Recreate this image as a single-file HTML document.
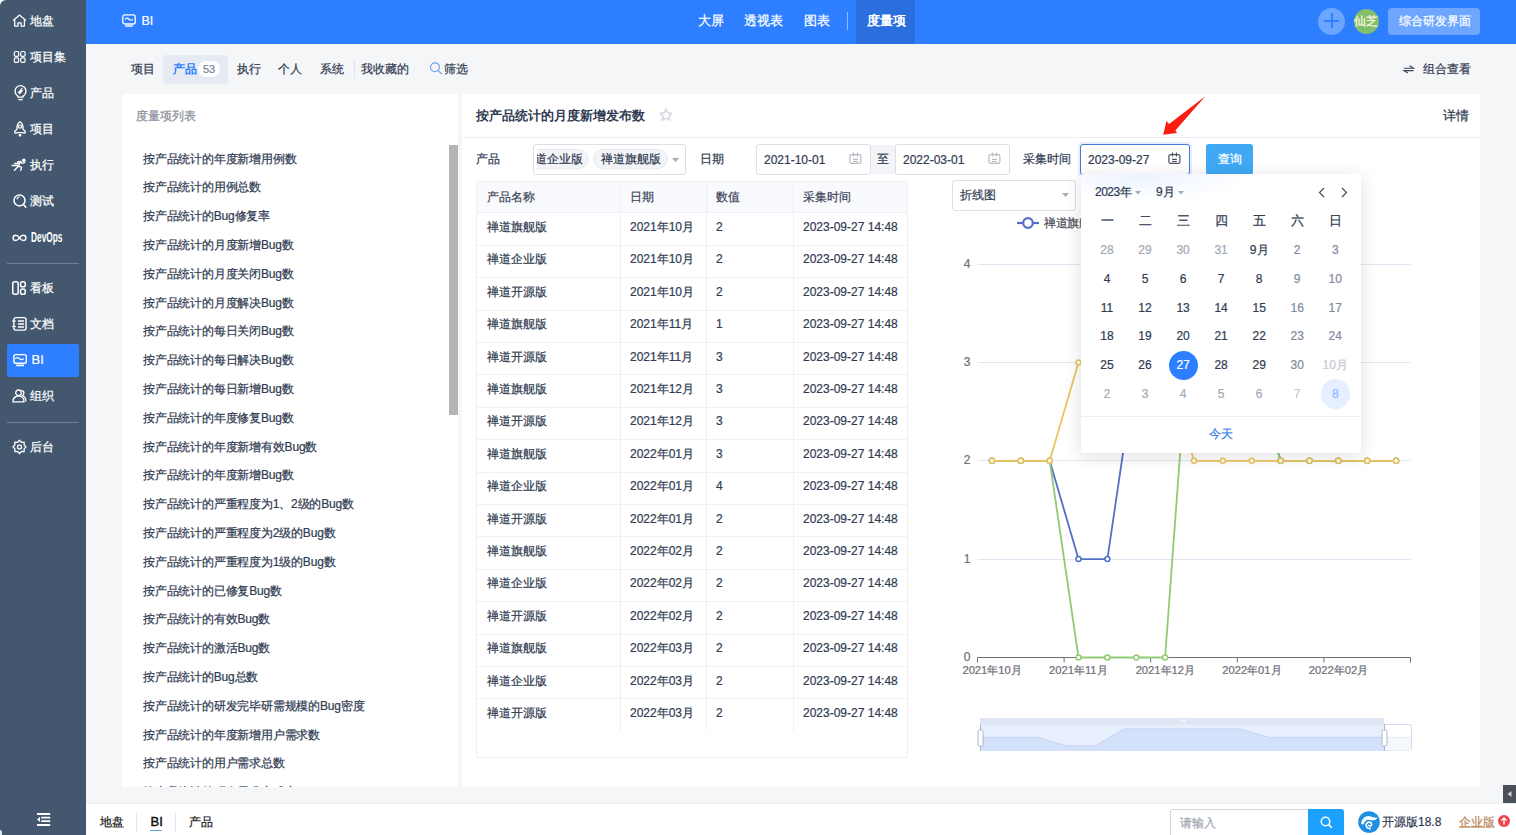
<!DOCTYPE html><html><head><meta charset="utf-8"><style>
*{box-sizing:border-box;margin:0;padding:0}
html,body{width:1516px;height:835px;overflow:hidden;background:#f5f6f8;font-family:"Liberation Sans",sans-serif;font-size:12px;color:#313c52}
.t{position:absolute;line-height:20px;white-space:nowrap;-webkit-text-stroke:0.22px currentColor}
.b{position:absolute}
svg{position:absolute;overflow:visible}
</style></head><body>
<div class="b" style="left:0;top:0;width:12px;height:12px;background:#fff"></div>
<div class="b" style="left:0;top:0;width:86px;height:835px;background:#43576e;border-top-left-radius:6px"></div>
<div class="b" style="left:0;top:830px;width:2px;height:5px;background:#dce6f0;border-top-right-radius:2px"></div>
<div class="b" style="left:7px;top:344px;width:72px;height:33px;background:#2e7fff;border-radius:2px"></div>
<div class="b" style="left:7px;top:263px;width:72px;height:1px;background:#6e8198"></div>
<div class="b" style="left:7px;top:422px;width:72px;height:1px;background:#6e8198"></div>
<svg style="left:12px;top:13px" width="16" height="16" viewBox="0 0 16 16"><path d="M1.2 7.4 L7.5 2.1 L13.9 7.4 M2.7 6.4 V13.1 H6 V9.9 H9.1 V13.1 H12.4 V6.4" fill="none" stroke="#fff" stroke-width="1.25" stroke-linejoin="round"/></svg>
<div class="t" style="left:30px;top:10.5px;font-size:12px;color:#ffffff;font-weight:normal;">地盘</div>
<svg style="left:12px;top:49px" width="16" height="16" viewBox="0 0 16 16"><rect x="2.3" y="2.5" width="4.4" height="4.8" rx="1.4" fill="none" stroke="#fff" stroke-width="1.2"/><rect x="8.7" y="2.5" width="4.4" height="4.8" rx="1.4" fill="none" stroke="#fff" stroke-width="1.2"/><rect x="2.3" y="8.8" width="4.4" height="4.6" rx="1.4" fill="none" stroke="#fff" stroke-width="1.2"/><rect x="8.7" y="8.8" width="4.4" height="4.6" rx="1.4" fill="none" stroke="#fff" stroke-width="1.2"/></svg>
<div class="t" style="left:30px;top:46.5px;font-size:12px;color:#ffffff;font-weight:normal;">项目集</div>
<svg style="left:12px;top:85px" width="16" height="16" viewBox="0 0 16 16"><path d="M5.9 11.1 C4 10 3.1 8.3 3.1 6.3 C3.1 3.1 5.5 0.7 8.5 0.7 C11.5 0.7 13.9 3.1 13.9 6.3 C13.9 8.3 13 10 11.1 11.1 V12.2 H5.9 Z" fill="none" stroke="#fff" stroke-width="1.3" stroke-linejoin="round"/><path d="M6.4 14.6 H10.6" stroke="#fff" stroke-width="1.4"/><path d="M10.2 3.2 L6.4 7.6 L10.4 5.4 L7.4 9.2" fill="none" stroke="#fff" stroke-width="1.3" stroke-linejoin="round"/></svg>
<div class="t" style="left:30px;top:82.5px;font-size:12px;color:#ffffff;font-weight:normal;">产品</div>
<svg style="left:12px;top:121px" width="16" height="16" viewBox="0 0 16 16"><path d="M8 0.7 C10.6 2.4 11.3 5.2 11 8.2 L13.2 10.3 C13.6 11.6 13 12.3 12 12.1 L10.5 11.7 H5.5 L4 12.1 C3 12.3 2.4 11.6 2.8 10.3 L5 8.2 C4.7 5.2 5.4 2.4 8 0.7 Z" fill="none" stroke="#fff" stroke-width="1.3" stroke-linejoin="round"/><circle cx="8" cy="5.6" r="1.6" fill="none" stroke="#fff" stroke-width="1.2"/><rect x="6.7" y="13" width="2.7" height="2.6" rx="0.8" fill="#fff"/></svg>
<div class="t" style="left:30px;top:118.5px;font-size:12px;color:#ffffff;font-weight:normal;">项目</div>
<svg style="left:12px;top:157px" width="16" height="16" viewBox="0 0 16 16"><circle cx="11.8" cy="3.2" r="1.8" fill="#fff"/><path d="M5.6 5 L8.6 4.5 L10 6.4 L12.8 5.4 M8.6 4.5 L6.4 9.2 L2.4 13.2 M6.4 9.2 L9.6 10.4 L8.6 13.4 M2.6 6.5 H6.4 M0.2 8.5 H5.6" fill="none" stroke="#fff" stroke-width="1.4" stroke-linecap="round" stroke-linejoin="round"/></svg>
<div class="t" style="left:30px;top:154.5px;font-size:12px;color:#ffffff;font-weight:normal;">执行</div>
<svg style="left:12px;top:193px" width="16" height="16" viewBox="0 0 16 16"><circle cx="7.5" cy="7.4" r="5.5" fill="none" stroke="#fff" stroke-width="1.5"/><path d="M11.5 11.6 L13.8 14.2" stroke="#fff" stroke-width="1.5" stroke-linecap="round"/><path d="M5 6 C5.4 5 6.2 4.3 7.2 4" fill="none" stroke="#fff" stroke-width="1.1" stroke-linecap="round"/></svg>
<div class="t" style="left:30px;top:190.5px;font-size:12px;color:#ffffff;font-weight:normal;">测试</div>
<svg style="left:12px;top:230px" width="16" height="16" viewBox="0 0 16 16"><path d="M7.5 7.9 C6.3 6.1 5.3 5.3 3.9 5.3 C2.3 5.3 1.1 6.4 1.1 7.9 C1.1 9.4 2.3 10.5 3.9 10.5 C5.3 10.5 6.3 9.7 7.5 7.9 C8.7 6.1 9.7 5.3 11.1 5.3 C12.7 5.3 13.9 6.4 13.9 7.9 C13.9 9.4 12.7 10.5 11.1 10.5 C9.7 10.5 8.7 9.7 7.5 7.9 Z" fill="none" stroke="#fff" stroke-width="1.4"/></svg>
<div class="t" style="left:30.8px;top:227.1px;font-size:14px;color:#ffffff;font-weight:bold;-webkit-text-stroke:0;letter-spacing:0px;transform:scaleX(0.595);transform-origin:left">DevOps</div>
<svg style="left:12px;top:280px" width="16" height="16" viewBox="0 0 16 16"><rect x="0.75" y="1.65" width="5.4" height="12.6" rx="2" fill="none" stroke="#fff" stroke-width="1.5"/><rect x="8.55" y="1.65" width="4.7" height="5.2" rx="1.8" fill="none" stroke="#fff" stroke-width="1.5"/><rect x="8.55" y="8.95" width="4.7" height="5.3" rx="1.8" fill="none" stroke="#fff" stroke-width="1.5"/></svg>
<div class="t" style="left:30px;top:277.5px;font-size:12px;color:#ffffff;font-weight:normal;">看板</div>
<svg style="left:12px;top:316px" width="16" height="16" viewBox="0 0 16 16"><rect x="1.9" y="1.6" width="12.1" height="12.5" rx="1.8" fill="none" stroke="#fff" stroke-width="1.4"/><path d="M5.9 5 H12 M5.9 8 H12 M5.9 11 H12" stroke="#fff" stroke-width="1.6"/><path d="M0 5 H3.9 M0 10.5 H3.9" stroke="#fff" stroke-width="1.2"/></svg>
<div class="t" style="left:30px;top:313.5px;font-size:12px;color:#ffffff;font-weight:normal;">文档</div>
<svg style="left:12px;top:352px" width="16" height="16" viewBox="0 0 16 16"><rect x="1.9" y="2.6" width="12.4" height="8.7" rx="1.8" fill="none" stroke="#fff" stroke-width="1.4"/><path d="M3.4 6.9 C4.6 5.2 5.8 5.2 7.3 6.6 C8.8 8 10.2 8.1 11.6 6.6" fill="none" stroke="#fff" stroke-width="1.3"/><path d="M4.2 13.4 H12" stroke="#fff" stroke-width="1.6"/></svg>
<div class="t" style="left:31.5px;top:349.5px;font-size:13px;color:#ffffff;font-weight:normal;">BI</div>
<svg style="left:12px;top:388px" width="16" height="16" viewBox="0 0 16 16"><circle cx="6.5" cy="4.8" r="2.8" fill="none" stroke="#fff" stroke-width="1.3"/><path d="M0.9 13.9 C0.9 10.2 3.3 8.2 6.5 8.2 C9.7 8.2 12 10.2 12 13.9 Z" fill="none" stroke="#fff" stroke-width="1.3" stroke-linejoin="round"/><path d="M9.6 2.3 C11 2.6 11.9 3.7 11.9 5 C11.9 6.1 11.3 7 10.4 7.5 C12.5 8.5 13.9 10.5 13.9 13.6" fill="none" stroke="#fff" stroke-width="1.3"/></svg>
<div class="t" style="left:30px;top:385.5px;font-size:12px;color:#ffffff;font-weight:normal;">组织</div>
<svg style="left:12px;top:439px" width="16" height="16" viewBox="0 0 16 16"><path d="M7.50 1.30 L9.41 3.28 L12.17 3.23 L12.12 5.99 L14.10 7.90 L12.12 9.81 L12.17 12.57 L9.41 12.52 L7.50 14.50 L5.59 12.52 L2.83 12.57 L2.88 9.81 L0.90 7.90 L2.88 5.99 L2.83 3.23 L5.59 3.28 Z" fill="none" stroke="#fff" stroke-width="1.3" stroke-linejoin="round"/><circle cx="7.5" cy="7.9" r="2" fill="none" stroke="#fff" stroke-width="1.3"/></svg>
<div class="t" style="left:30px;top:436.5px;font-size:12px;color:#ffffff;font-weight:normal;">后台</div>
<svg style="left:37px;top:813px" width="14" height="14" viewBox="0 0 14 14"><path d="M0 1 H13.2 M4.2 4.6 H13.2 M4.2 8.1 H13.2 M0 12 H13.2" stroke="#fff" stroke-width="1.9"/><path d="M0 6.4 L3 3.8 V9.1 Z" fill="#fff"/></svg>
<div class="b" style="left:86px;top:0;width:1430px;height:44px;background:#2e7fff"></div>
<svg style="left:122px;top:14px" width="14" height="13" viewBox="0 0 14 13"><rect x="0.8" y="0.8" width="12.4" height="9.2" rx="2" fill="none" stroke="#fff" stroke-width="1.3"/><path d="M3 5.4 C4.2 3.8 5.4 3.8 7 5.2 C8.6 6.6 9.8 6.6 11 5" fill="none" stroke="#fff" stroke-width="1.2"/><path d="M3.2 12 H10.8" stroke="#fff" stroke-width="1.4"/></svg>
<div class="t" style="left:141.5px;top:11.0px;font-size:12.5px;color:#ffffff;font-weight:normal;">BI</div>
<div class="b" style="left:856px;top:0;width:59px;height:44px;background:#2b6fdf"></div>
<div class="t" style="left:697.5px;top:10.5px;font-size:13px;color:#ffffff;font-weight:normal;">大屏</div>
<div class="t" style="left:744px;top:10.5px;font-size:13px;color:#ffffff;font-weight:normal;">透视表</div>
<div class="t" style="left:804px;top:10.5px;font-size:13px;color:#ffffff;font-weight:normal;">图表</div>
<div class="b" style="left:847px;top:12px;width:1px;height:18px;background:#8fbaff"></div>
<div class="t" style="left:866.5px;top:10.5px;font-size:13px;color:#ffffff;font-weight:bold;-webkit-text-stroke:0;">度量项</div>
<div class="b" style="left:1318px;top:8px;width:27px;height:27px;border-radius:50%;background:#6aa6ff"></div>
<div class="b" style="left:1324px;top:19.8px;width:15px;height:2px;background:#2e7fff"></div>
<div class="b" style="left:1330.5px;top:13.3px;width:2px;height:15px;background:#2e7fff"></div>
<div class="b" style="left:1354px;top:9px;width:25px;height:25px;border-radius:50%;background:#83bf6a"></div>
<div class="t" style="left:1354px;top:10.8px;font-size:12px;color:#fffbe6;font-weight:normal;">仙芝</div>
<div class="b" style="left:1388px;top:8px;width:92px;height:27px;border-radius:4px;background:#6ea6ff"></div>
<div class="t" style="left:1399px;top:10.8px;font-size:12px;color:#ffffff;font-weight:normal;">综合研发界面</div>
<div class="b" style="left:163px;top:55px;width:65px;height:29px;border-radius:3px;background:#e6ebf3"></div>
<div class="t" style="left:131px;top:58.6px;font-size:12px;color:#313c52;font-weight:normal;">项目</div>
<div class="t" style="left:172.5px;top:58.6px;font-size:12px;color:#2e7fff;font-weight:bold;-webkit-text-stroke:0;">产品</div>
<div class="b" style="left:198px;top:61px;width:22px;height:16px;border-radius:8px;background:#fff"></div>
<div class="t" style="left:203px;top:59.0px;font-size:11px;color:#7c8396;font-weight:normal;">53</div>
<div class="t" style="left:236.5px;top:58.6px;font-size:12px;color:#313c52;font-weight:normal;">执行</div>
<div class="t" style="left:278px;top:58.6px;font-size:12px;color:#313c52;font-weight:normal;">个人</div>
<div class="t" style="left:319.5px;top:58.6px;font-size:12px;color:#313c52;font-weight:normal;">系统</div>
<div class="b" style="left:354px;top:60px;width:1px;height:18px;background:#dfe3ea"></div>
<div class="t" style="left:360.5px;top:58.6px;font-size:12px;color:#313c52;font-weight:normal;">我收藏的</div>
<svg style="left:430px;top:62px" width="13" height="13" viewBox="0 0 13 13"><circle cx="5" cy="5.3" r="4.4" fill="none" stroke="#6b9cf2" stroke-width="1.15"/><path d="M8.2 8.6 L11.4 11.6" stroke="#6b9cf2" stroke-width="1.2" stroke-linecap="round"/></svg>
<div class="t" style="left:444px;top:58.6px;font-size:12px;color:#313c52;font-weight:normal;">筛选</div>
<svg style="left:1404px;top:65px" width="10" height="9" viewBox="0 0 10 9"><path d="M0 3.2 H9.5 L5.6 0.8 M9.5 5.6 H0 L3.8 8" fill="none" stroke="#3a4256" stroke-width="1.1"/></svg>
<div class="t" style="left:1423px;top:58.6px;font-size:12px;color:#313c52;font-weight:normal;">组合查看</div>
<div class="b" style="left:122px;top:94px;width:336px;height:693px;background:#fff;border-radius:2px;overflow:hidden" id="lc">
<div class="t" style="left:21px;top:54.5px;font-size:12px;color:#313c52;letter-spacing:-0.2px">按产品统计的年度新增用例数</div>
<div class="t" style="left:21px;top:83.3px;font-size:12px;color:#313c52;letter-spacing:-0.2px">按产品统计的用例总数</div>
<div class="t" style="left:21px;top:112.1px;font-size:12px;color:#313c52;letter-spacing:-0.2px">按产品统计的Bug修复率</div>
<div class="t" style="left:21px;top:140.9px;font-size:12px;color:#313c52;letter-spacing:-0.2px">按产品统计的月度新增Bug数</div>
<div class="t" style="left:21px;top:169.7px;font-size:12px;color:#313c52;letter-spacing:-0.2px">按产品统计的月度关闭Bug数</div>
<div class="t" style="left:21px;top:198.5px;font-size:12px;color:#313c52;letter-spacing:-0.2px">按产品统计的月度解决Bug数</div>
<div class="t" style="left:21px;top:227.3px;font-size:12px;color:#313c52;letter-spacing:-0.2px">按产品统计的每日关闭Bug数</div>
<div class="t" style="left:21px;top:256.1px;font-size:12px;color:#313c52;letter-spacing:-0.2px">按产品统计的每日解决Bug数</div>
<div class="t" style="left:21px;top:284.9px;font-size:12px;color:#313c52;letter-spacing:-0.2px">按产品统计的每日新增Bug数</div>
<div class="t" style="left:21px;top:313.7px;font-size:12px;color:#313c52;letter-spacing:-0.2px">按产品统计的年度修复Bug数</div>
<div class="t" style="left:21px;top:342.5px;font-size:12px;color:#313c52;letter-spacing:-0.2px">按产品统计的年度新增有效Bug数</div>
<div class="t" style="left:21px;top:371.3px;font-size:12px;color:#313c52;letter-spacing:-0.2px">按产品统计的年度新增Bug数</div>
<div class="t" style="left:21px;top:400.1px;font-size:12px;color:#313c52;letter-spacing:-0.2px">按产品统计的严重程度为1、2级的Bug数</div>
<div class="t" style="left:21px;top:428.9px;font-size:12px;color:#313c52;letter-spacing:-0.2px">按产品统计的严重程度为2级的Bug数</div>
<div class="t" style="left:21px;top:457.7px;font-size:12px;color:#313c52;letter-spacing:-0.2px">按产品统计的严重程度为1级的Bug数</div>
<div class="t" style="left:21px;top:486.5px;font-size:12px;color:#313c52;letter-spacing:-0.2px">按产品统计的已修复Bug数</div>
<div class="t" style="left:21px;top:515.3px;font-size:12px;color:#313c52;letter-spacing:-0.2px">按产品统计的有效Bug数</div>
<div class="t" style="left:21px;top:544.1px;font-size:12px;color:#313c52;letter-spacing:-0.2px">按产品统计的激活Bug数</div>
<div class="t" style="left:21px;top:572.9px;font-size:12px;color:#313c52;letter-spacing:-0.2px">按产品统计的Bug总数</div>
<div class="t" style="left:21px;top:601.7px;font-size:12px;color:#313c52;letter-spacing:-0.2px">按产品统计的研发完毕研需规模的Bug密度</div>
<div class="t" style="left:21px;top:630.5px;font-size:12px;color:#313c52;letter-spacing:-0.2px">按产品统计的年度新增用户需求数</div>
<div class="t" style="left:21px;top:659.3px;font-size:12px;color:#313c52;letter-spacing:-0.2px">按产品统计的用户需求总数</div>
<div class="t" style="left:21px;top:688.1px;font-size:12px;color:#313c52;letter-spacing:-0.2px">按产品统计的研发需求完成率</div>
</div>
<div class="t" style="left:136px;top:106.0px;font-size:12px;color:#8a8f9c;font-weight:normal;">度量项列表</div>
<div class="b" style="left:449px;top:145px;width:9px;height:270px;background:#b4b4b4"></div>
<div class="b" style="left:462px;top:94px;width:1018px;height:693px;background:#fff;border-radius:2px"></div>
<div class="t" style="left:476px;top:105.5px;font-size:13px;color:#313c52;font-weight:bold;-webkit-text-stroke:0;">按产品统计的月度新增发布数</div>
<svg style="left:659px;top:108px" width="14" height="14" viewBox="0 0 14 14"><path d="M7 1 L8.8 4.8 L12.9 5.3 L9.9 8.1 L10.7 12.2 L7 10.2 L3.3 12.2 L4.1 8.1 L1.1 5.3 L5.2 4.8 Z" fill="none" stroke="#d3d7df" stroke-width="1.5" stroke-linejoin="round"/></svg>
<div class="t" style="left:1442.5px;top:105.5px;font-size:13px;color:#313c52;font-weight:normal;">详情</div>
<div class="b" style="left:462px;top:137px;width:1018px;height:1px;background:#eceef2"></div>
<div class="t" style="left:476px;top:149.0px;font-size:12px;color:#313c52;font-weight:normal;">产品</div>
<div class="b" style="left:533px;top:144px;width:153px;height:31px;border:1px solid #dcdfe5;border-radius:3px;background:#fff;overflow:hidden"><div class="b" style="left:3px;top:0;width:55px;height:29px;overflow:hidden"><div class="b" style="left:-22px;top:4px;width:74px;height:20px;border:1px solid #e8eaee;border-radius:10px;background:#f3f4f7"></div><div class="t" style="left:-14px;top:3.5px;font-size:12px;color:#313c52">禅道企业版</div></div><div class="b" style="left:59px;top:4px;width:75px;height:20px;border:1px solid #e8eaee;border-radius:10px;background:#f3f4f7"></div><div class="t" style="left:67px;top:3.5px;font-size:12px;color:#313c52">禅道旗舰版</div><svg style="left:138px;top:13px" width="7" height="4" viewBox="0 0 7 4"><path d="M0 0 H7 L3.5 4 Z" fill="#a6abb6"/></svg></div>
<div class="t" style="left:699.5px;top:149.0px;font-size:12px;color:#313c52;font-weight:normal;">日期</div>
<div class="b" style="left:756px;top:144px;width:115px;height:31px;border:1px solid #dcdfe5;border-radius:3px;background:#fff;"></div>
<div class="t" style="left:764px;top:149.5px;font-size:12px;color:#313c52;font-weight:normal;">2021-10-01</div>
<svg style="left:849px;top:152px" width="13" height="13" viewBox="0 0 13 13"><rect x="0.9" y="2.6" width="11" height="8.8" rx="1.6" fill="none" stroke="#b5b9c2" stroke-width="1.2"/><path d="M4.5 0.4 V4.6 M8.4 0.4 V4.6 M4 7.4 H8.8 M4 9.5 H8.8" stroke="#b5b9c2" stroke-width="1.1"/></svg>
<div class="b" style="left:871px;top:145px;width:25px;height:29px;background:#f3f4f7"></div>
<div class="t" style="left:877px;top:149.0px;font-size:12px;color:#313c52;font-weight:normal;">至</div>
<div class="b" style="left:895px;top:144px;width:115px;height:31px;border:1px solid #dcdfe5;border-radius:3px;background:#fff;"></div>
<div class="t" style="left:903px;top:149.5px;font-size:12px;color:#313c52;font-weight:normal;">2022-03-01</div>
<svg style="left:988px;top:152px" width="13" height="13" viewBox="0 0 13 13"><rect x="0.9" y="2.6" width="11" height="8.8" rx="1.6" fill="none" stroke="#b5b9c2" stroke-width="1.2"/><path d="M4.5 0.4 V4.6 M8.4 0.4 V4.6 M4 7.4 H8.8 M4 9.5 H8.8" stroke="#b5b9c2" stroke-width="1.1"/></svg>
<div class="t" style="left:1023px;top:149.0px;font-size:12px;color:#313c52;font-weight:normal;">采集时间</div>
<div class="b" style="left:1080px;top:144px;width:110px;height:31px;border:1px solid #4579d6;border-radius:3px;background:#fff;box-shadow:0 0 0 2px rgba(46,127,255,0.12);"></div>
<div class="t" style="left:1088px;top:149.5px;font-size:12px;color:#313c52;font-weight:normal;">2023-09-27</div>
<svg style="left:1168px;top:152px" width="13" height="13" viewBox="0 0 13 13"><rect x="0.9" y="2.6" width="11" height="8.8" rx="1.6" fill="none" stroke="#4a5060" stroke-width="1.2"/><path d="M4.5 0.4 V4.6 M8.4 0.4 V4.6 M4 7.4 H8.8 M4 9.5 H8.8" stroke="#4a5060" stroke-width="1.1"/></svg>
<div class="b" style="left:1206px;top:144px;width:47px;height:31px;border-radius:3px;background:#3fa9f5"></div>
<div class="t" style="left:1217.5px;top:148.8px;font-size:12px;color:#fff;font-weight:normal;">查询</div>
<div class="b" style="left:476px;top:181px;width:432px;height:577px;border:1px solid #eef0f4;background:#fff"></div>
<div class="b" style="left:477px;top:182px;width:430px;height:30px;background:#f9fafd"></div>
<div class="b" style="left:620px;top:182px;width:1px;height:548.7px;background:#eef0f4"></div>
<div class="b" style="left:706px;top:182px;width:1px;height:548.7px;background:#eef0f4"></div>
<div class="b" style="left:793px;top:182px;width:1px;height:548.7px;background:#eef0f4"></div>
<div class="b" style="left:476px;top:212px;width:431px;height:1px;background:#eef0f4"></div>
<div class="b" style="left:476px;top:245px;width:431px;height:1px;background:#eef0f4"></div>
<div class="b" style="left:476px;top:277px;width:431px;height:1px;background:#eef0f4"></div>
<div class="b" style="left:476px;top:310px;width:431px;height:1px;background:#eef0f4"></div>
<div class="b" style="left:476px;top:342px;width:431px;height:1px;background:#eef0f4"></div>
<div class="b" style="left:476px;top:374px;width:431px;height:1px;background:#eef0f4"></div>
<div class="b" style="left:476px;top:407px;width:431px;height:1px;background:#eef0f4"></div>
<div class="b" style="left:476px;top:439px;width:431px;height:1px;background:#eef0f4"></div>
<div class="b" style="left:476px;top:472px;width:431px;height:1px;background:#eef0f4"></div>
<div class="b" style="left:476px;top:504px;width:431px;height:1px;background:#eef0f4"></div>
<div class="b" style="left:476px;top:536px;width:431px;height:1px;background:#eef0f4"></div>
<div class="b" style="left:476px;top:569px;width:431px;height:1px;background:#eef0f4"></div>
<div class="b" style="left:476px;top:601px;width:431px;height:1px;background:#eef0f4"></div>
<div class="b" style="left:476px;top:634px;width:431px;height:1px;background:#eef0f4"></div>
<div class="b" style="left:476px;top:666px;width:431px;height:1px;background:#eef0f4"></div>
<div class="b" style="left:476px;top:698px;width:431px;height:1px;background:#eef0f4"></div>
<div class="t" style="left:487px;top:187.0px;font-size:12px;color:#3f4759;font-weight:normal;">产品名称</div>
<div class="t" style="left:630px;top:187.0px;font-size:12px;color:#3f4759;font-weight:normal;">日期</div>
<div class="t" style="left:716px;top:187.0px;font-size:12px;color:#3f4759;font-weight:normal;">数值</div>
<div class="t" style="left:803px;top:187.0px;font-size:12px;color:#3f4759;font-weight:normal;">采集时间</div>
<div class="t" style="left:487px;top:217.0px;font-size:12px;color:#313c52;font-weight:normal;">禅道旗舰版</div>
<div class="t" style="left:630px;top:217.0px;font-size:12px;color:#313c52;font-weight:normal;">2021年10月</div>
<div class="t" style="left:716px;top:217.0px;font-size:12px;color:#313c52;font-weight:normal;">2</div>
<div class="t" style="left:803px;top:217.0px;font-size:12px;color:#313c52;font-weight:normal;">2023-09-27 14:48</div>
<div class="t" style="left:487px;top:249.4px;font-size:12px;color:#313c52;font-weight:normal;">禅道企业版</div>
<div class="t" style="left:630px;top:249.4px;font-size:12px;color:#313c52;font-weight:normal;">2021年10月</div>
<div class="t" style="left:716px;top:249.4px;font-size:12px;color:#313c52;font-weight:normal;">2</div>
<div class="t" style="left:803px;top:249.4px;font-size:12px;color:#313c52;font-weight:normal;">2023-09-27 14:48</div>
<div class="t" style="left:487px;top:281.8px;font-size:12px;color:#313c52;font-weight:normal;">禅道开源版</div>
<div class="t" style="left:630px;top:281.8px;font-size:12px;color:#313c52;font-weight:normal;">2021年10月</div>
<div class="t" style="left:716px;top:281.8px;font-size:12px;color:#313c52;font-weight:normal;">2</div>
<div class="t" style="left:803px;top:281.8px;font-size:12px;color:#313c52;font-weight:normal;">2023-09-27 14:48</div>
<div class="t" style="left:487px;top:314.2px;font-size:12px;color:#313c52;font-weight:normal;">禅道旗舰版</div>
<div class="t" style="left:630px;top:314.2px;font-size:12px;color:#313c52;font-weight:normal;">2021年11月</div>
<div class="t" style="left:716px;top:314.2px;font-size:12px;color:#313c52;font-weight:normal;">1</div>
<div class="t" style="left:803px;top:314.2px;font-size:12px;color:#313c52;font-weight:normal;">2023-09-27 14:48</div>
<div class="t" style="left:487px;top:346.6px;font-size:12px;color:#313c52;font-weight:normal;">禅道开源版</div>
<div class="t" style="left:630px;top:346.6px;font-size:12px;color:#313c52;font-weight:normal;">2021年11月</div>
<div class="t" style="left:716px;top:346.6px;font-size:12px;color:#313c52;font-weight:normal;">3</div>
<div class="t" style="left:803px;top:346.6px;font-size:12px;color:#313c52;font-weight:normal;">2023-09-27 14:48</div>
<div class="t" style="left:487px;top:378.9px;font-size:12px;color:#313c52;font-weight:normal;">禅道旗舰版</div>
<div class="t" style="left:630px;top:378.9px;font-size:12px;color:#313c52;font-weight:normal;">2021年12月</div>
<div class="t" style="left:716px;top:378.9px;font-size:12px;color:#313c52;font-weight:normal;">3</div>
<div class="t" style="left:803px;top:378.9px;font-size:12px;color:#313c52;font-weight:normal;">2023-09-27 14:48</div>
<div class="t" style="left:487px;top:411.3px;font-size:12px;color:#313c52;font-weight:normal;">禅道开源版</div>
<div class="t" style="left:630px;top:411.3px;font-size:12px;color:#313c52;font-weight:normal;">2021年12月</div>
<div class="t" style="left:716px;top:411.3px;font-size:12px;color:#313c52;font-weight:normal;">3</div>
<div class="t" style="left:803px;top:411.3px;font-size:12px;color:#313c52;font-weight:normal;">2023-09-27 14:48</div>
<div class="t" style="left:487px;top:443.7px;font-size:12px;color:#313c52;font-weight:normal;">禅道旗舰版</div>
<div class="t" style="left:630px;top:443.7px;font-size:12px;color:#313c52;font-weight:normal;">2022年01月</div>
<div class="t" style="left:716px;top:443.7px;font-size:12px;color:#313c52;font-weight:normal;">3</div>
<div class="t" style="left:803px;top:443.7px;font-size:12px;color:#313c52;font-weight:normal;">2023-09-27 14:48</div>
<div class="t" style="left:487px;top:476.1px;font-size:12px;color:#313c52;font-weight:normal;">禅道企业版</div>
<div class="t" style="left:630px;top:476.1px;font-size:12px;color:#313c52;font-weight:normal;">2022年01月</div>
<div class="t" style="left:716px;top:476.1px;font-size:12px;color:#313c52;font-weight:normal;">4</div>
<div class="t" style="left:803px;top:476.1px;font-size:12px;color:#313c52;font-weight:normal;">2023-09-27 14:48</div>
<div class="t" style="left:487px;top:508.5px;font-size:12px;color:#313c52;font-weight:normal;">禅道开源版</div>
<div class="t" style="left:630px;top:508.5px;font-size:12px;color:#313c52;font-weight:normal;">2022年01月</div>
<div class="t" style="left:716px;top:508.5px;font-size:12px;color:#313c52;font-weight:normal;">2</div>
<div class="t" style="left:803px;top:508.5px;font-size:12px;color:#313c52;font-weight:normal;">2023-09-27 14:48</div>
<div class="t" style="left:487px;top:540.9px;font-size:12px;color:#313c52;font-weight:normal;">禅道旗舰版</div>
<div class="t" style="left:630px;top:540.9px;font-size:12px;color:#313c52;font-weight:normal;">2022年02月</div>
<div class="t" style="left:716px;top:540.9px;font-size:12px;color:#313c52;font-weight:normal;">2</div>
<div class="t" style="left:803px;top:540.9px;font-size:12px;color:#313c52;font-weight:normal;">2023-09-27 14:48</div>
<div class="t" style="left:487px;top:573.3px;font-size:12px;color:#313c52;font-weight:normal;">禅道企业版</div>
<div class="t" style="left:630px;top:573.3px;font-size:12px;color:#313c52;font-weight:normal;">2022年02月</div>
<div class="t" style="left:716px;top:573.3px;font-size:12px;color:#313c52;font-weight:normal;">2</div>
<div class="t" style="left:803px;top:573.3px;font-size:12px;color:#313c52;font-weight:normal;">2023-09-27 14:48</div>
<div class="t" style="left:487px;top:605.7px;font-size:12px;color:#313c52;font-weight:normal;">禅道开源版</div>
<div class="t" style="left:630px;top:605.7px;font-size:12px;color:#313c52;font-weight:normal;">2022年02月</div>
<div class="t" style="left:716px;top:605.7px;font-size:12px;color:#313c52;font-weight:normal;">2</div>
<div class="t" style="left:803px;top:605.7px;font-size:12px;color:#313c52;font-weight:normal;">2023-09-27 14:48</div>
<div class="t" style="left:487px;top:638.1px;font-size:12px;color:#313c52;font-weight:normal;">禅道旗舰版</div>
<div class="t" style="left:630px;top:638.1px;font-size:12px;color:#313c52;font-weight:normal;">2022年03月</div>
<div class="t" style="left:716px;top:638.1px;font-size:12px;color:#313c52;font-weight:normal;">2</div>
<div class="t" style="left:803px;top:638.1px;font-size:12px;color:#313c52;font-weight:normal;">2023-09-27 14:48</div>
<div class="t" style="left:487px;top:670.5px;font-size:12px;color:#313c52;font-weight:normal;">禅道企业版</div>
<div class="t" style="left:630px;top:670.5px;font-size:12px;color:#313c52;font-weight:normal;">2022年03月</div>
<div class="t" style="left:716px;top:670.5px;font-size:12px;color:#313c52;font-weight:normal;">2</div>
<div class="t" style="left:803px;top:670.5px;font-size:12px;color:#313c52;font-weight:normal;">2023-09-27 14:48</div>
<div class="t" style="left:487px;top:702.8px;font-size:12px;color:#313c52;font-weight:normal;">禅道开源版</div>
<div class="t" style="left:630px;top:702.8px;font-size:12px;color:#313c52;font-weight:normal;">2022年03月</div>
<div class="t" style="left:716px;top:702.8px;font-size:12px;color:#313c52;font-weight:normal;">2</div>
<div class="t" style="left:803px;top:702.8px;font-size:12px;color:#313c52;font-weight:normal;">2023-09-27 14:48</div>
<div class="b" style="left:952px;top:180px;width:124px;height:31px;border:1px solid #dcdfe5;border-radius:3px;background:#fff"></div>
<div class="t" style="left:960px;top:184.5px;font-size:12px;color:#313c52;font-weight:normal;">折线图</div>
<svg style="left:1062px;top:193px" width="7" height="4" viewBox="0 0 7 4"><path d="M0 0 H7 L3.5 4 Z" fill="#a6abb6"/></svg>
<svg style="left:0;top:0" width="1516" height="835" viewBox="0 0 1516 835"><path d="M977.5 559.5 H1410.5" stroke="#e0e6f1" stroke-width="1"/><path d="M977.5 460.5 H1410.5" stroke="#e0e6f1" stroke-width="1"/><path d="M977.5 362.5 H1410.5" stroke="#e0e6f1" stroke-width="1"/><path d="M977.5 264.5 H1410.5" stroke="#e0e6f1" stroke-width="1"/><path d="M977.5 657.5 H1410.5" stroke="#6e7079" stroke-width="1"/><path d="M977.5 657.5 V662.5" stroke="#6e7079" stroke-width="1"/><path d="M1064.1 657.5 V662.5" stroke="#6e7079" stroke-width="1"/><path d="M1150.7 657.5 V662.5" stroke="#6e7079" stroke-width="1"/><path d="M1237.3 657.5 V662.5" stroke="#6e7079" stroke-width="1"/><path d="M1323.9 657.5 V662.5" stroke="#6e7079" stroke-width="1"/><path d="M1410.5 657.5 V662.5" stroke="#6e7079" stroke-width="1"/></svg>
<div class="t" style="left:963.8px;top:647.0px;font-size:12px;color:#6e7079;font-weight:normal;">0</div>
<div class="t" style="left:963.8px;top:548.6px;font-size:12px;color:#6e7079;font-weight:normal;">1</div>
<div class="t" style="left:963.8px;top:450.3px;font-size:12px;color:#6e7079;font-weight:normal;">2</div>
<div class="t" style="left:963.8px;top:352.0px;font-size:12px;color:#6e7079;font-weight:normal;">3</div>
<div class="t" style="left:963.8px;top:253.6px;font-size:12px;color:#6e7079;font-weight:normal;">4</div>
<div class="t" style="left:962.4333333333333px;top:659.5px;font-size:11.2px;color:#6e7079;font-weight:normal;">2021年10月</div>
<div class="t" style="left:1049.0333333333333px;top:659.5px;font-size:11.2px;color:#6e7079;font-weight:normal;">2021年11月</div>
<div class="t" style="left:1135.6333333333332px;top:659.5px;font-size:11.2px;color:#6e7079;font-weight:normal;">2021年12月</div>
<div class="t" style="left:1222.2333333333333px;top:659.5px;font-size:11.2px;color:#6e7079;font-weight:normal;">2022年01月</div>
<div class="t" style="left:1308.8333333333333px;top:659.5px;font-size:11.2px;color:#6e7079;font-weight:normal;">2022年02月</div>
<svg style="left:0;top:0" width="1516" height="835" viewBox="0 0 1516 835"><polyline points="991.9,460.8 1020.8,460.8 1049.7,460.8 1078.5,559.1 1107.4,559.1 1136.3,362.5 1165.1,362.5 1194.0,362.5 1222.9,362.5 1251.7,362.5 1280.6,460.8 1309.5,460.8 1338.3,460.8 1367.2,460.8 1396.1,460.8" fill="none" stroke="#5470c6" stroke-width="1.8" stroke-linejoin="round"/><circle cx="991.9" cy="460.8" r="2.5" fill="#fff" stroke="#5470c6" stroke-width="1.5"/><circle cx="1020.8" cy="460.8" r="2.5" fill="#fff" stroke="#5470c6" stroke-width="1.5"/><circle cx="1049.7" cy="460.8" r="2.5" fill="#fff" stroke="#5470c6" stroke-width="1.5"/><circle cx="1078.5" cy="559.1" r="2.5" fill="#fff" stroke="#5470c6" stroke-width="1.5"/><circle cx="1107.4" cy="559.1" r="2.5" fill="#fff" stroke="#5470c6" stroke-width="1.5"/><circle cx="1136.3" cy="362.5" r="2.5" fill="#fff" stroke="#5470c6" stroke-width="1.5"/><circle cx="1165.1" cy="362.5" r="2.5" fill="#fff" stroke="#5470c6" stroke-width="1.5"/><circle cx="1194.0" cy="362.5" r="2.5" fill="#fff" stroke="#5470c6" stroke-width="1.5"/><circle cx="1222.9" cy="362.5" r="2.5" fill="#fff" stroke="#5470c6" stroke-width="1.5"/><circle cx="1251.7" cy="362.5" r="2.5" fill="#fff" stroke="#5470c6" stroke-width="1.5"/><circle cx="1280.6" cy="460.8" r="2.5" fill="#fff" stroke="#5470c6" stroke-width="1.5"/><circle cx="1309.5" cy="460.8" r="2.5" fill="#fff" stroke="#5470c6" stroke-width="1.5"/><circle cx="1338.3" cy="460.8" r="2.5" fill="#fff" stroke="#5470c6" stroke-width="1.5"/><circle cx="1367.2" cy="460.8" r="2.5" fill="#fff" stroke="#5470c6" stroke-width="1.5"/><circle cx="1396.1" cy="460.8" r="2.5" fill="#fff" stroke="#5470c6" stroke-width="1.5"/><polyline points="991.9,460.8 1020.8,460.8 1049.7,460.8 1078.5,657.5 1107.4,657.5 1136.3,657.5 1165.1,657.5 1194.0,264.1 1222.9,264.1 1251.7,362.5 1280.6,460.8 1309.5,460.8 1338.3,460.8 1367.2,460.8 1396.1,460.8" fill="none" stroke="#91cc75" stroke-width="1.8" stroke-linejoin="round"/><circle cx="991.9" cy="460.8" r="2.5" fill="#fff" stroke="#91cc75" stroke-width="1.5"/><circle cx="1020.8" cy="460.8" r="2.5" fill="#fff" stroke="#91cc75" stroke-width="1.5"/><circle cx="1049.7" cy="460.8" r="2.5" fill="#fff" stroke="#91cc75" stroke-width="1.5"/><circle cx="1078.5" cy="657.5" r="2.5" fill="#fff" stroke="#91cc75" stroke-width="1.5"/><circle cx="1107.4" cy="657.5" r="2.5" fill="#fff" stroke="#91cc75" stroke-width="1.5"/><circle cx="1136.3" cy="657.5" r="2.5" fill="#fff" stroke="#91cc75" stroke-width="1.5"/><circle cx="1165.1" cy="657.5" r="2.5" fill="#fff" stroke="#91cc75" stroke-width="1.5"/><circle cx="1194.0" cy="264.1" r="2.5" fill="#fff" stroke="#91cc75" stroke-width="1.5"/><circle cx="1222.9" cy="264.1" r="2.5" fill="#fff" stroke="#91cc75" stroke-width="1.5"/><circle cx="1251.7" cy="362.5" r="2.5" fill="#fff" stroke="#91cc75" stroke-width="1.5"/><circle cx="1280.6" cy="460.8" r="2.5" fill="#fff" stroke="#91cc75" stroke-width="1.5"/><circle cx="1309.5" cy="460.8" r="2.5" fill="#fff" stroke="#91cc75" stroke-width="1.5"/><circle cx="1338.3" cy="460.8" r="2.5" fill="#fff" stroke="#91cc75" stroke-width="1.5"/><circle cx="1367.2" cy="460.8" r="2.5" fill="#fff" stroke="#91cc75" stroke-width="1.5"/><circle cx="1396.1" cy="460.8" r="2.5" fill="#fff" stroke="#91cc75" stroke-width="1.5"/><polyline points="991.9,460.8 1020.8,460.8 1049.7,460.8 1078.5,362.5 1107.4,362.5 1136.3,362.5 1165.1,362.5 1194.0,460.8 1222.9,460.8 1251.7,460.8 1280.6,460.8 1309.5,460.8 1338.3,460.8 1367.2,460.8 1396.1,460.8" fill="none" stroke="#ecc35e" stroke-width="1.8" stroke-linejoin="round"/><circle cx="991.9" cy="460.8" r="2.5" fill="#fff" stroke="#ecc35e" stroke-width="1.5"/><circle cx="1020.8" cy="460.8" r="2.5" fill="#fff" stroke="#ecc35e" stroke-width="1.5"/><circle cx="1049.7" cy="460.8" r="2.5" fill="#fff" stroke="#ecc35e" stroke-width="1.5"/><circle cx="1078.5" cy="362.5" r="2.5" fill="#fff" stroke="#ecc35e" stroke-width="1.5"/><circle cx="1107.4" cy="362.5" r="2.5" fill="#fff" stroke="#ecc35e" stroke-width="1.5"/><circle cx="1136.3" cy="362.5" r="2.5" fill="#fff" stroke="#ecc35e" stroke-width="1.5"/><circle cx="1165.1" cy="362.5" r="2.5" fill="#fff" stroke="#ecc35e" stroke-width="1.5"/><circle cx="1194.0" cy="460.8" r="2.5" fill="#fff" stroke="#ecc35e" stroke-width="1.5"/><circle cx="1222.9" cy="460.8" r="2.5" fill="#fff" stroke="#ecc35e" stroke-width="1.5"/><circle cx="1251.7" cy="460.8" r="2.5" fill="#fff" stroke="#ecc35e" stroke-width="1.5"/><circle cx="1280.6" cy="460.8" r="2.5" fill="#fff" stroke="#ecc35e" stroke-width="1.5"/><circle cx="1309.5" cy="460.8" r="2.5" fill="#fff" stroke="#ecc35e" stroke-width="1.5"/><circle cx="1338.3" cy="460.8" r="2.5" fill="#fff" stroke="#ecc35e" stroke-width="1.5"/><circle cx="1367.2" cy="460.8" r="2.5" fill="#fff" stroke="#ecc35e" stroke-width="1.5"/><circle cx="1396.1" cy="460.8" r="2.5" fill="#fff" stroke="#ecc35e" stroke-width="1.5"/><path d="M1017 223 H1039" stroke="#5470c6" stroke-width="2.2"/><circle cx="1028" cy="223" r="4.8" fill="#fff" stroke="#5470c6" stroke-width="2.2"/><rect x="980.5" y="724.5" width="431" height="26" rx="2" fill="none" stroke="#d2dbee" stroke-width="1"/><rect x="980" y="718" width="404" height="6.5" fill="#dfe5f3"/><rect x="980" y="724.5" width="404" height="26.5" fill="#e8effc"/><polygon points="980,751 980.0,737.4 1008.9,737.4 1037.7,737.4 1066.6,745.9 1095.4,745.9 1124.3,728.9 1153.2,728.9 1182.0,728.9 1210.9,728.9 1239.7,728.9 1268.6,737.4 1297.5,737.4 1326.3,737.4 1355.2,737.4 1384.0,737.4 1384,751" fill="#d3e1fa"/><polyline points="980.0,737.4 1008.9,737.4 1037.7,737.4 1066.6,745.9 1095.4,745.9 1124.3,728.9 1153.2,728.9 1182.0,728.9 1210.9,728.9 1239.7,728.9 1268.6,737.4 1297.5,737.4 1326.3,737.4 1355.2,737.4 1384.0,737.4" fill="none" stroke="#c3d3f2" stroke-width="1"/><path d="M1384.5 737.4 H1411.5" stroke="#e4e8f0" stroke-width="1"/><rect x="1385" y="738" width="26" height="12.5" fill="#f5f7fb"/><path d="M980.5 724 V751 M1384.5 724 V751" stroke="#aab6cf" stroke-width="1"/><rect x="978" y="730" width="5" height="16" rx="1.5" fill="#fff" stroke="#aab6cf" stroke-width="1"/><rect x="1382" y="730" width="5" height="16" rx="1.5" fill="#fff" stroke="#aab6cf" stroke-width="1"/><path d="M1180.5 719.5 V722 M1182.5 719.5 V722 M1184.5 719.5 V722" stroke="#fff" stroke-width="0.8"/></svg>
<div class="t" style="left:1044px;top:212.5px;font-size:12px;color:#4a4e5a;font-weight:normal;letter-spacing:-0.3px">禅道旗舰版</div>
<div class="b" style="left:1081px;top:174px;width:280px;height:279px;background:radial-gradient(ellipse 110px 28px at 60px 0px, rgba(46,127,255,0.09), rgba(46,127,255,0) 100%) , #fff;border-radius:2px;box-shadow:0 3px 18px rgba(0,0,0,0.13)">
<div class="t" style="left:14px;top:8px;font-size:12px;color:#313c52;letter-spacing:-0.5px">2023年</div>
<svg style="left:54px;top:17px" width="6" height="3.5" viewBox="0 0 6 3.5"><path d="M0 0 H6 L3 3.5 Z" fill="#a6abb6"/></svg>
<div class="t" style="left:75px;top:8px;font-size:12px;color:#313c52">9月</div>
<svg style="left:97px;top:17px" width="6" height="3.5" viewBox="0 0 6 3.5"><path d="M0 0 H6 L3 3.5 Z" fill="#a6abb6"/></svg>
<svg style="left:237px;top:13px" width="7" height="11" viewBox="0 0 7 11"><path d="M6 1 L1.5 5.5 L6 10" fill="none" stroke="#3d4556" stroke-width="1.1"/></svg>
<svg style="left:259.5px;top:13px" width="7" height="11" viewBox="0 0 7 11"><path d="M1 1 L5.5 5.5 L1 10" fill="none" stroke="#3d4556" stroke-width="1.1"/></svg>
<div class="t" style="left:16.0px;width:20px;text-align:center;top:37.0px;font-size:13px;color:#313c52">一</div>
<div class="t" style="left:54.0px;width:20px;text-align:center;top:37.0px;font-size:13px;color:#313c52">二</div>
<div class="t" style="left:92.1px;width:20px;text-align:center;top:37.0px;font-size:13px;color:#313c52">三</div>
<div class="t" style="left:130.1px;width:20px;text-align:center;top:37.0px;font-size:13px;color:#313c52">四</div>
<div class="t" style="left:168.2px;width:20px;text-align:center;top:37.0px;font-size:13px;color:#313c52">五</div>
<div class="t" style="left:206.2px;width:20px;text-align:center;top:37.0px;font-size:13px;color:#313c52">六</div>
<div class="t" style="left:244.3px;width:20px;text-align:center;top:37.0px;font-size:13px;color:#313c52">日</div>
<div class="b" style="left:87.5px;top:177.2px;width:29px;height:29px;border-radius:50%;background:#2e7fff"></div>
<div class="b" style="left:239.7px;top:205.4px;width:29.6px;height:29.6px;border-radius:50%;background:#e6efff"></div>
<div class="t" style="left:6.0px;width:40px;text-align:center;top:66.0px;font-size:12px;color:#a3a9b5;font-weight:normal">28</div>
<div class="t" style="left:44.0px;width:40px;text-align:center;top:66.0px;font-size:12px;color:#a3a9b5;font-weight:normal">29</div>
<div class="t" style="left:82.1px;width:40px;text-align:center;top:66.0px;font-size:12px;color:#a3a9b5;font-weight:normal">30</div>
<div class="t" style="left:120.1px;width:40px;text-align:center;top:66.0px;font-size:12px;color:#a3a9b5;font-weight:normal">31</div>
<div class="t" style="left:158.2px;width:40px;text-align:center;top:66.0px;font-size:12px;color:#313c52;font-weight:normal">9月</div>
<div class="t" style="left:196.2px;width:40px;text-align:center;top:66.0px;font-size:12px;color:#838a9d;font-weight:normal">2</div>
<div class="t" style="left:234.3px;width:40px;text-align:center;top:66.0px;font-size:12px;color:#838a9d;font-weight:normal">3</div>
<div class="t" style="left:6.0px;width:40px;text-align:center;top:94.8px;font-size:12px;color:#313c52;font-weight:normal">4</div>
<div class="t" style="left:44.0px;width:40px;text-align:center;top:94.8px;font-size:12px;color:#313c52;font-weight:normal">5</div>
<div class="t" style="left:82.1px;width:40px;text-align:center;top:94.8px;font-size:12px;color:#313c52;font-weight:normal">6</div>
<div class="t" style="left:120.1px;width:40px;text-align:center;top:94.8px;font-size:12px;color:#313c52;font-weight:normal">7</div>
<div class="t" style="left:158.2px;width:40px;text-align:center;top:94.8px;font-size:12px;color:#313c52;font-weight:normal">8</div>
<div class="t" style="left:196.2px;width:40px;text-align:center;top:94.8px;font-size:12px;color:#838a9d;font-weight:normal">9</div>
<div class="t" style="left:234.3px;width:40px;text-align:center;top:94.8px;font-size:12px;color:#838a9d;font-weight:normal">10</div>
<div class="t" style="left:6.0px;width:40px;text-align:center;top:123.6px;font-size:12px;color:#313c52;font-weight:normal">11</div>
<div class="t" style="left:44.0px;width:40px;text-align:center;top:123.6px;font-size:12px;color:#313c52;font-weight:normal">12</div>
<div class="t" style="left:82.1px;width:40px;text-align:center;top:123.6px;font-size:12px;color:#313c52;font-weight:normal">13</div>
<div class="t" style="left:120.1px;width:40px;text-align:center;top:123.6px;font-size:12px;color:#313c52;font-weight:normal">14</div>
<div class="t" style="left:158.2px;width:40px;text-align:center;top:123.6px;font-size:12px;color:#313c52;font-weight:normal">15</div>
<div class="t" style="left:196.2px;width:40px;text-align:center;top:123.6px;font-size:12px;color:#838a9d;font-weight:normal">16</div>
<div class="t" style="left:234.3px;width:40px;text-align:center;top:123.6px;font-size:12px;color:#838a9d;font-weight:normal">17</div>
<div class="t" style="left:6.0px;width:40px;text-align:center;top:152.4px;font-size:12px;color:#313c52;font-weight:normal">18</div>
<div class="t" style="left:44.0px;width:40px;text-align:center;top:152.4px;font-size:12px;color:#313c52;font-weight:normal">19</div>
<div class="t" style="left:82.1px;width:40px;text-align:center;top:152.4px;font-size:12px;color:#313c52;font-weight:normal">20</div>
<div class="t" style="left:120.1px;width:40px;text-align:center;top:152.4px;font-size:12px;color:#313c52;font-weight:normal">21</div>
<div class="t" style="left:158.2px;width:40px;text-align:center;top:152.4px;font-size:12px;color:#313c52;font-weight:normal">22</div>
<div class="t" style="left:196.2px;width:40px;text-align:center;top:152.4px;font-size:12px;color:#838a9d;font-weight:normal">23</div>
<div class="t" style="left:234.3px;width:40px;text-align:center;top:152.4px;font-size:12px;color:#838a9d;font-weight:normal">24</div>
<div class="t" style="left:6.0px;width:40px;text-align:center;top:181.2px;font-size:12px;color:#313c52;font-weight:normal">25</div>
<div class="t" style="left:44.0px;width:40px;text-align:center;top:181.2px;font-size:12px;color:#313c52;font-weight:normal">26</div>
<div class="t" style="left:82.1px;width:40px;text-align:center;top:181.2px;font-size:12px;color:#fff;font-weight:normal">27</div>
<div class="t" style="left:120.1px;width:40px;text-align:center;top:181.2px;font-size:12px;color:#313c52;font-weight:normal">28</div>
<div class="t" style="left:158.2px;width:40px;text-align:center;top:181.2px;font-size:12px;color:#313c52;font-weight:normal">29</div>
<div class="t" style="left:196.2px;width:40px;text-align:center;top:181.2px;font-size:12px;color:#838a9d;font-weight:normal">30</div>
<div class="t" style="left:234.3px;width:40px;text-align:center;top:181.2px;font-size:12px;color:#c6cad2;font-weight:normal">10月</div>
<div class="t" style="left:6.0px;width:40px;text-align:center;top:210.0px;font-size:12px;color:#a3a9b5;font-weight:normal">2</div>
<div class="t" style="left:44.0px;width:40px;text-align:center;top:210.0px;font-size:12px;color:#a3a9b5;font-weight:normal">3</div>
<div class="t" style="left:82.1px;width:40px;text-align:center;top:210.0px;font-size:12px;color:#a3a9b5;font-weight:normal">4</div>
<div class="t" style="left:120.1px;width:40px;text-align:center;top:210.0px;font-size:12px;color:#a3a9b5;font-weight:normal">5</div>
<div class="t" style="left:158.2px;width:40px;text-align:center;top:210.0px;font-size:12px;color:#a3a9b5;font-weight:normal">6</div>
<div class="t" style="left:196.2px;width:40px;text-align:center;top:210.0px;font-size:12px;color:#c6cad2;font-weight:normal">7</div>
<div class="t" style="left:234.3px;width:40px;text-align:center;top:210.0px;font-size:12px;color:#8db8ff;font-weight:normal">8</div>
<div class="b" style="left:0;top:241.7px;width:280px;height:1px;background:#eceef2"></div>
<div class="t" style="left:120px;width:40px;text-align:center;top:250.4px;font-size:12px;color:#3a7de6">今天</div>
</div>
<svg style="left:0;top:0" width="1516" height="835" viewBox="0 0 1516 835"><polygon points="1205.3,96.3 1175.3,130.5 1177,133.1 1163.2,134.8 1166.5,120.9 1169.1,123.9" fill="#fb1e0e"/></svg>
<div class="b" style="left:86px;top:803px;width:1430px;height:32px;background:#fff;border-top:1px solid #eceef3"></div>
<div class="t" style="left:100px;top:811.8px;font-size:12px;color:#1a1a1a;font-weight:normal;">地盘</div>
<div class="b" style="left:136px;top:813px;width:1px;height:18px;background:#e3e6eb"></div>
<div class="t" style="left:150.5px;top:811.8px;font-size:13px;color:#111111;font-weight:normal;-webkit-text-stroke:0.45px #111">BI</div>
<div class="b" style="left:150px;top:829.5px;width:12px;height:1.6px;background:#5aa8dc"></div>
<div class="b" style="left:175px;top:813px;width:1px;height:18px;background:#e3e6eb"></div>
<div class="t" style="left:189px;top:811.8px;font-size:12px;color:#1a1a1a;font-weight:normal;">产品</div>
<div class="b" style="left:1170px;top:809px;width:139px;height:28px;border:1px solid #d2d6dd;border-radius:2px 0 0 2px;background:#fff"></div>
<div class="t" style="left:1180px;top:812.5px;font-size:12px;color:#a0a5b0;font-weight:normal;">请输入</div>
<div class="b" style="left:1308px;top:809px;width:36px;height:28px;background:#1da1ff;border-radius:0 3px 0 0"></div>
<svg style="left:1320px;top:816px" width="13" height="13" viewBox="0 0 13 13"><circle cx="5.5" cy="5.5" r="4.3" fill="none" stroke="#fff" stroke-width="1.5"/><path d="M8.6 8.6 L11.8 11.8" stroke="#fff" stroke-width="1.6"/></svg>
<svg style="left:1358px;top:810.5px" width="22" height="22" viewBox="0 0 22 22"><circle cx="11" cy="11" r="10.8" fill="#1f8fe3"/><path d="M3.2 13 C3.4 7.6 7.6 4.4 12 5.2 C14.6 5.7 16.6 7.4 19.8 6.4 C18 9.4 14.6 10 12 9 C9.2 8 6.4 9.6 5.6 13.4 Z" fill="#fff"/><path d="M12.2 17.6 C8.8 17.8 7.2 14.6 8.6 12.4 C10 10.4 13.4 10.8 13.6 13.2 C13.8 14.8 12 15.6 10.9 14.5" fill="none" stroke="#fff" stroke-width="1.7" stroke-linecap="round"/></svg>
<div class="t" style="left:1382px;top:811.5px;font-size:12px;color:#313c52;font-weight:normal;">开源版18.8</div>
<div class="t" style="left:1459px;top:811.5px;font-size:12px;color:#b98658;font-weight:normal;">企业版</div>
<div class="b" style="left:1459px;top:826.5px;width:35px;height:1px;background:#d2b295"></div>
<div class="b" style="left:1497.5px;top:815.2px;width:12px;height:12px;border-radius:50%;background:#f0484a"></div>
<svg style="left:1497.5px;top:815.2px" width="12" height="12" viewBox="0 0 12 12"><path d="M6 9.5 V3 M3.5 5.5 L6 3 L8.5 5.5" fill="none" stroke="#fff" stroke-width="1.3"/></svg>
<div class="b" style="left:1503px;top:785px;width:13px;height:18px;background:#4b4f57"></div>
<svg style="left:1507px;top:791px" width="5" height="6" viewBox="0 0 5 6"><path d="M4.5 0 V6 L0.5 3 Z" fill="#d0d3d8"/></svg>
</body></html>
